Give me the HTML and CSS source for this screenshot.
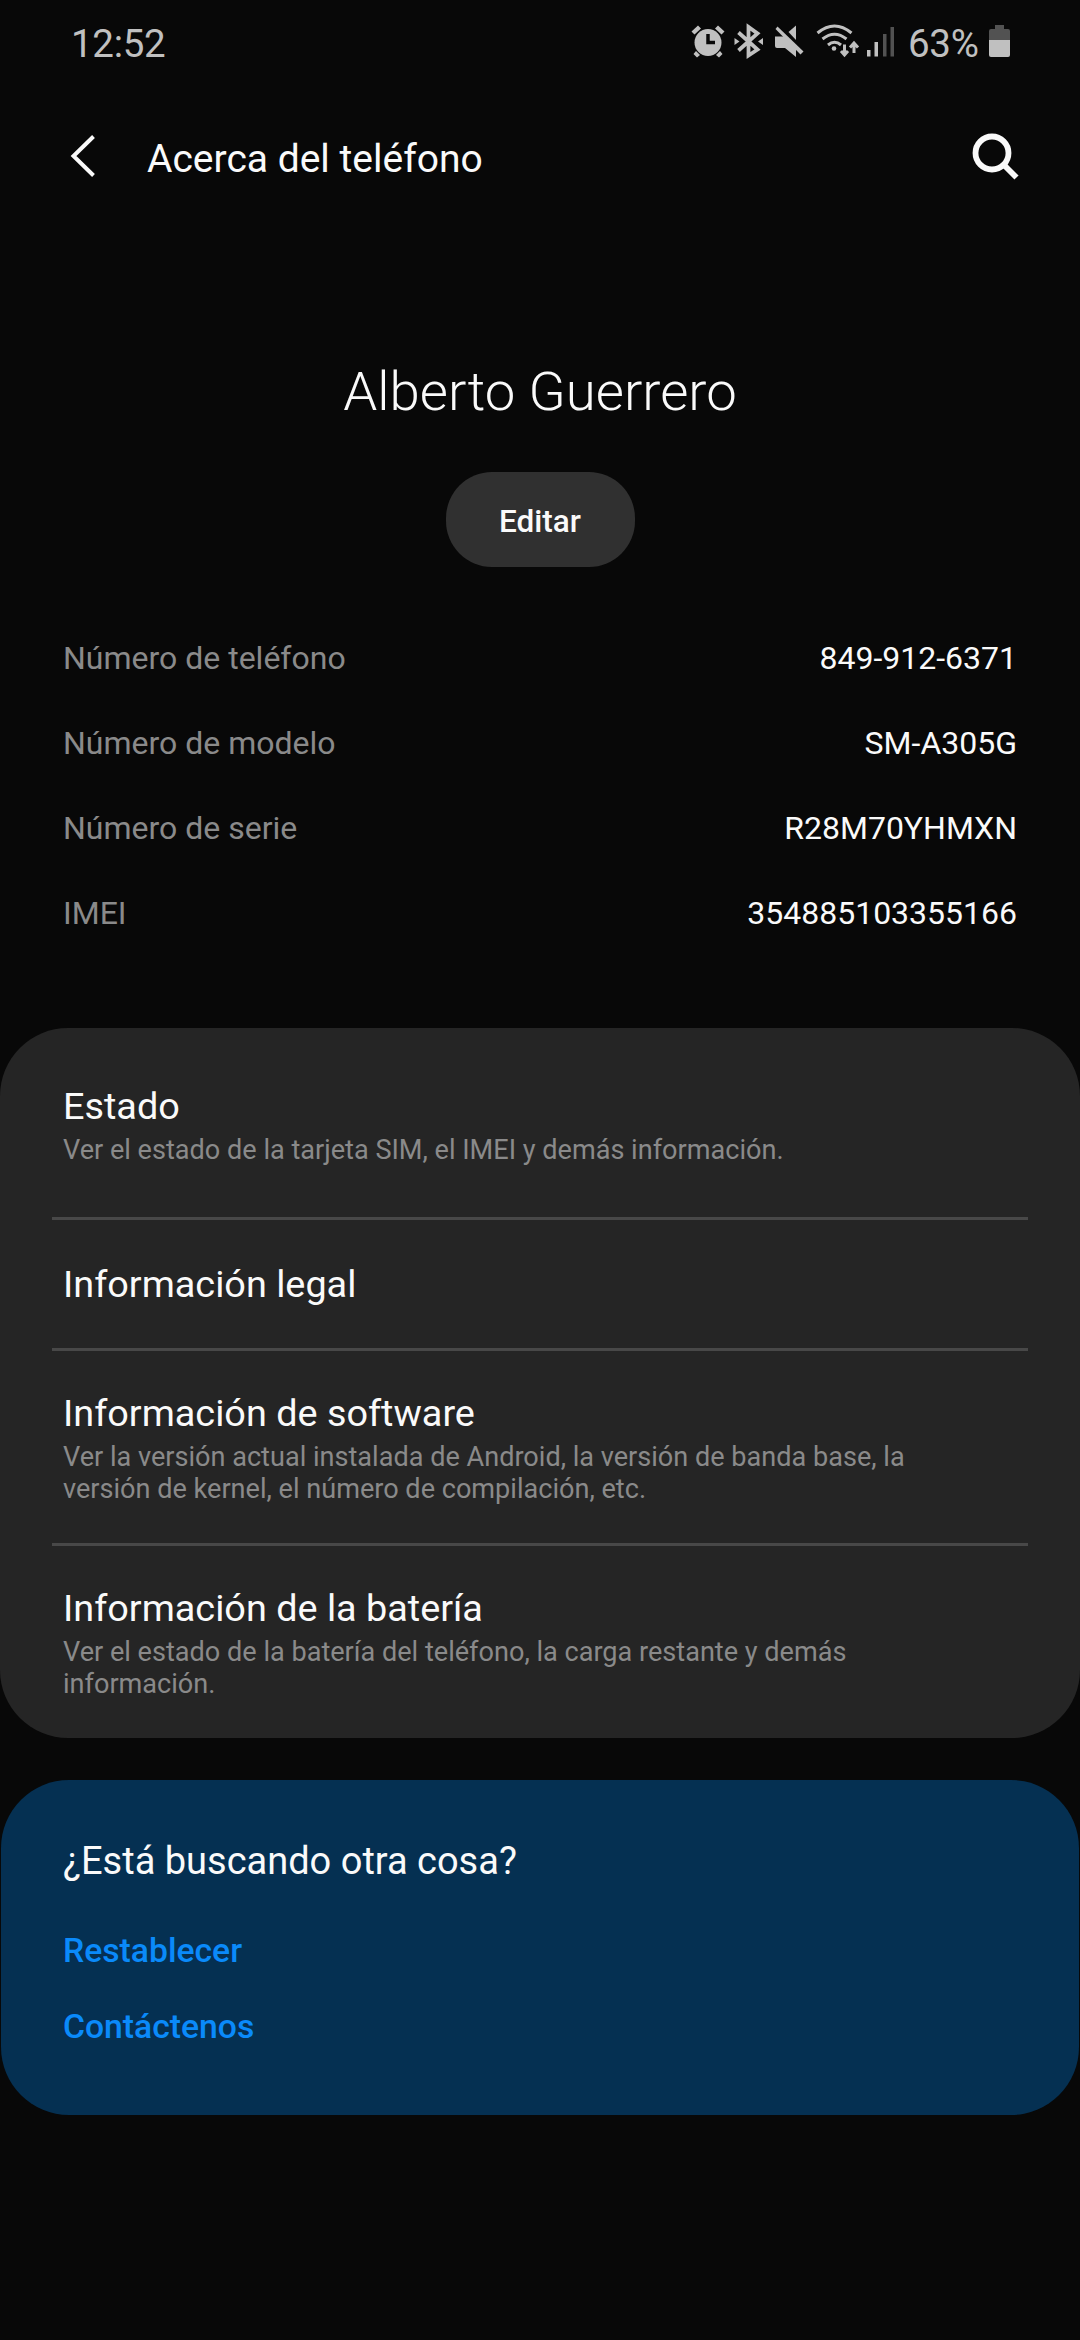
FILE: index.html
```html
<!DOCTYPE html>
<html lang="es">
<head>
  <meta charset="UTF-8" />
  <meta name="viewport" content="width=device-width, initial-scale=1.0"/>
  <title>Acerca del teléfono</title>
  <link rel="stylesheet" href="styles.css">
</head>
<body>
  <div class="status-bar">
    <span class="clock">12:52</span>
    <!-- alarm, bluetooth, mute, wifi, signal -->
    <svg class="status-icons" width="204" height="40" viewBox="0 0 204 40">
      <g fill="#c0c0c0">
        <circle cx="18" cy="22.500" r="13.500"/>
        <path d="M1.500 11.500L8 5.500L11 8.500L4.500 14.500zM34.500 11.500L28 5.500L25 8.500L31.500 14.500z"/>
        <path d="M6 31l4 4-3 2.500-3.500-3.500zM30 31l-4 4 3 2.500 3.500-3.500z"/>
      </g>
      <path d="M18 14v8.500h7" fill="none" stroke="#080808" stroke-width="3.500"/>
      <g fill="none" stroke="#c0c0c0" stroke-width="3.800">
        <path d="M48.500 12.500L67.500 29.500L58.500 35.500V7L67.500 13.500L48.500 30.500"/>
      </g>
      <path d="M44.500 18l5 3.500-5 3.500zM73 18l-5 3.500 5 3.500z" fill="#c0c0c0"/>
      <g fill="#c0c0c0">
        <path d="M85 16.500h9L106 28.500V37L95 28H87q-2 0-2-2z"/>
        <path d="M98.500 12L106 5.500V20z"/>
        <path d="M87.500 6.500L113.500 31.500L110.500 34.500L85.500 9z"/>
      </g>
      <g fill="none" stroke="#c0c0c0" stroke-width="3">
        <path d="M127.500 13q17-14 34 0M132.500 19q12-9.500 24 0M138 25q6.500-5.500 13 0"/>
        <path d="M154.500 24.500v10M151 31l3.500 4 3.500-4M164 33v-10M160 27.500l4-4.500 4 4.500"/>
      </g>
      <circle cx="144" cy="28.500" r="2.300" fill="#c0c0c0"/>
      <path d="M177 30h3.500v6.500h-3.500zM184.500 22h3.500v14.500h-3.500z" fill="#c0c0c0"/>
      <path d="M193 14h3.500v22.500h-3.500zM200.500 7h3.500v29.500h-3.500z" fill="#525252"/>
    </svg>
    <span class="percent">63%</span>
    <svg class="battery" width="21" height="34" viewBox="0 0 21 34">
      <path d="M6 1h9v4h4q2 0 2 2v9H0V7q0-2 2-2h4z" fill="#525252"/>
      <path d="M0 16h21v15q0 2-2 2H2q-2 0-2-2z" fill="#c0c0c0"/>
    </svg>
  </div>

  <header class="app-bar">
    <svg class="back" width="26" height="44" viewBox="0 0 26 44">
      <path d="M23.500 2.500L3.500 22L23.500 41.500" fill="none" stroke="#fafafa" stroke-width="4"/>
    </svg>
    <h1>Acerca del teléfono</h1>
    <svg class="search" width="48" height="48" viewBox="0 0 48 48">
      <circle cx="20" cy="20" r="16.500" fill="none" stroke="#fafafa" stroke-width="5.800"/>
      <path d="M31.500 31.500L44.500 44.500" stroke="#fafafa" stroke-width="5.800"/>
    </svg>
  </header>

  <section class="owner">
    <h2>Alberto Guerrero</h2>
    <button class="edit-button">Editar</button>
  </section>

  <dl class="device-info">
    <div class="info-row"><dt>Número de teléfono</dt><dd>849-912-6371</dd></div>
    <div class="info-row"><dt>Número de modelo</dt><dd>SM-A305G</dd></div>
    <div class="info-row"><dt>Número de serie</dt><dd>R28M70YHMXN</dd></div>
    <div class="info-row"><dt>IMEI</dt><dd>354885103355166</dd></div>
  </dl>

  <ul class="menu-card">
    <li class="menu-item status">
      <h3>Estado</h3>
      <p>Ver el estado de la tarjeta SIM, el IMEI y demás información.</p>
    </li>
    <li class="menu-item legal">
      <h3>Información legal</h3>
    </li>
    <li class="menu-item software">
      <h3>Información de software</h3>
      <p>Ver la versión actual instalada de Android, la versión de banda base, la versión de kernel, el número de compilación, etc.</p>
    </li>
    <li class="menu-item battery-info">
      <h3>Información de la batería</h3>
      <p>Ver el estado de la batería del teléfono, la carga restante y demás información.</p>
    </li>
  </ul>

  <section class="help-card">
    <h3>¿Está buscando otra cosa?</h3>
    <a href="#">Restablecer</a>
    <a href="#">Contáctenos</a>
  </section>
</body>
</html>
```

FILE: styles.css
```css
* {
  box-sizing: border-box;
}
body {
  margin: 0;
  min-height: 2340px;
  background: #080808;
  color: #fafafa;
  font-family: Roboto, sans-serif;
}
h1, h2, h3, p, dl, dd, ul {
  margin: 0;
  padding: 0;
  font-weight: 400;
}
svg {
  display: block;
  flex: none;
}
.status-bar {
  display: flex;
  height: 88px;
  padding: 20px 70px 0 71px;
  color: #c0c0c0;
  font-size: 38.5px;
  line-height: 48px;
}
.clock {
  letter-spacing: -0.3px;
}
.status-icons {
  margin-left: auto;
}
.percent {
  width: 72px;
  margin-left: 14px;
  letter-spacing: -0.3px;
}
.battery {
  margin: 4px 0 0 9px;
}
.app-bar {
  display: flex;
  align-items: center;
  height: 136px;
  padding: 0 60px 0 70px;
}
.app-bar h1 {
  margin: 5px 0 0 51px;
  font-size: 39px;
  line-height: 46px;
}
.search {
  margin: 2px 0 0 auto;
}
.owner {
  display: flex;
  flex-direction: column;
  align-items: center;
  padding-top: 134px;
}
.owner h2 {
  font-size: 54.5px;
  font-weight: 300;
  line-height: 66px;
}
.edit-button {
  width: 189px;
  height: 95px;
  margin-top: 48px;
  padding: 3px 0 0;
  border: 0;
  border-radius: 46px;
  background: #303030;
  color: #fafafa;
  font: 500 31.5px Roboto, sans-serif;
}
.device-info {
  padding: 49px 63px 0;
}
.info-row {
  display: flex;
  justify-content: space-between;
  height: 85px;
  font-size: 32px;
  line-height: 85px;
}
.info-row dt {
  color: #8a8a8a;
}
.menu-card {
  height: 710px;
  margin-top: 72px;
  padding: 0 52px;
  border-radius: 68px;
  background: #252525;
  list-style: none;
}
.menu-item {
  padding: 39px 80px 0 11px;
  border-top: 3px solid #484848;
}
.menu-item h3, .help-card h3 {
  font-size: 38px;
  line-height: 46px;
}
.menu-item h3 {
  font-size: 37.8px;
}
.menu-item p {
  margin-top: 5px;
  color: #8a8a8a;
  font-size: 27.1px;
  line-height: 32px;
}
.menu-item.status {
  height: 189px;
  padding-top: 55px;
  border-top: 0;
}
.menu-item.legal {
  height: 131px;
  padding-top: 41px;
}
.menu-item.software {
  height: 195px;
}
.help-card {
  display: flex;
  flex-direction: column;
  align-items: flex-start;
  height: 335px;
  margin: 42px 1px 0;
  padding: 58px 62px 0;
  border-radius: 68px;
  background: #053052;
}
.help-card a {
  height: 76px;
  color: #0a8afa;
  font-size: 33.7px;
  font-weight: 500;
  line-height: 76px;
  text-decoration: none;
}
.help-card h3 + a {
  margin-top: 29px;
}
```
